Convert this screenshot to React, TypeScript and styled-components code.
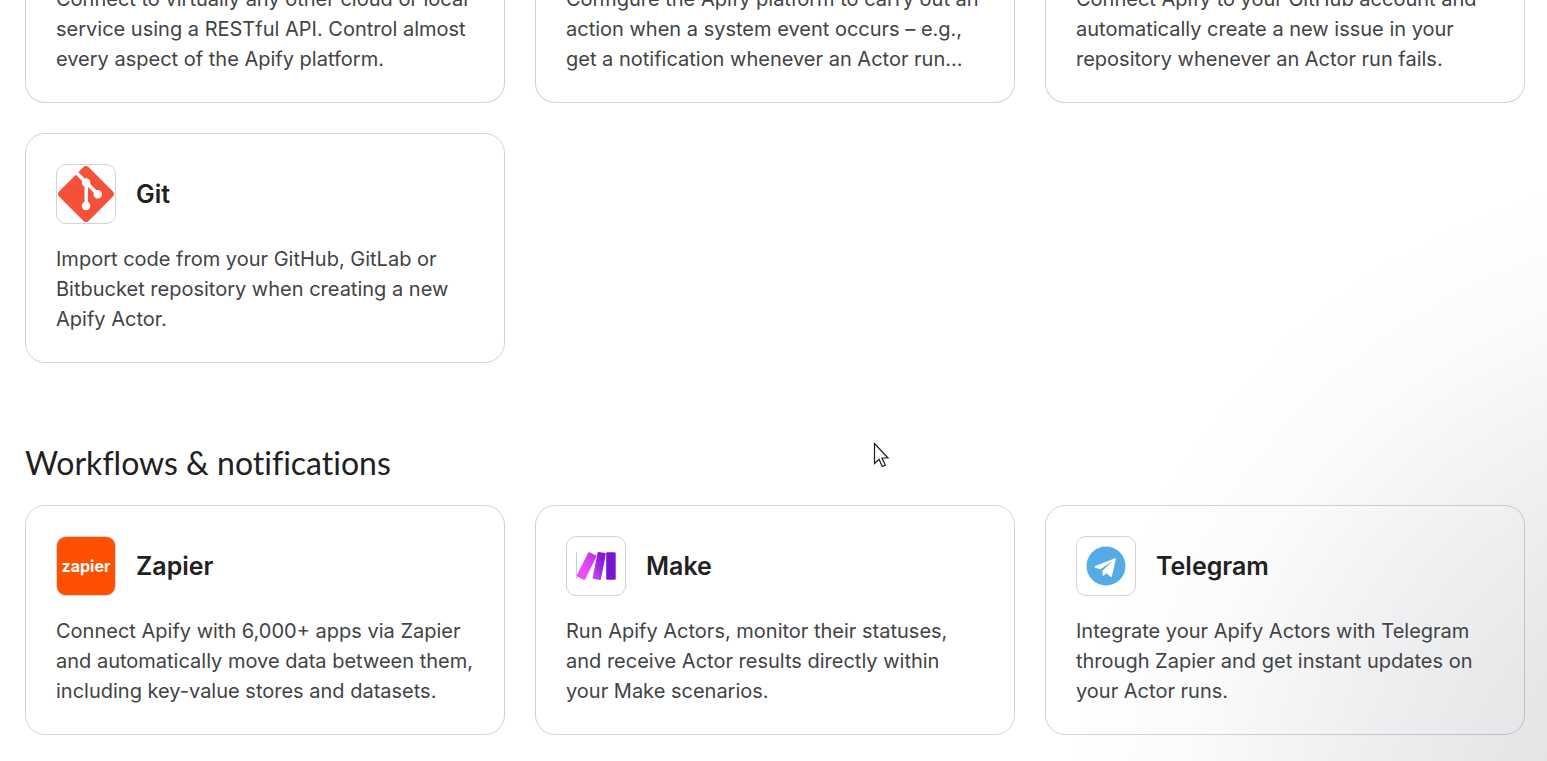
import React from "react";
import styled, { createGlobalStyle } from "styled-components";
import { SiGit } from "react-icons/si";

const GlobalStyle = createGlobalStyle`
  * { box-sizing: border-box; }
  body {
    margin: 0;
    background: #fff;
    color: #1f2123;
    font-family: Inter, "Liberation Sans", sans-serif;
  }
`;

const Page = styled.main`
  position: relative;
  min-height: 100vh;
  padding: 0 22px 26px 25px;
  overflow: hidden;
  background: radial-gradient(
    circle 680px at calc(100% + 200px) calc(100% + 80px),
    #e2e3e5 25%,
    #e5e6e8 36%,
    #edeef0 56%,
    #f4f4f5 69%,
    #fbfbfb 83%,
    #fff 100%
  );
`;

const Section = styled.section`
  & + & {
    margin-top: 80px;
  }
`;

const SectionTitle = styled.h2`
  margin: 0 0 22px;
  font-family: Lato, "Liberation Sans", sans-serif;
  font-size: 32px;
  font-weight: 400;
  font-variant-ligatures: none;
  line-height: 40px;
`;

const CardGrid = styled.div`
  display: grid;
  grid-template-columns: repeat(3, minmax(0, 1fr));
  gap: 30px;
`;

const Card = styled.article<{ $cut?: boolean }>`
  padding: ${(p) => (p.$cut ? "0 30px 28px" : "30px 30px 28px")};
  border: 1px solid rgba(20, 22, 30, 0.19);
  border-top-width: ${(p) => (p.$cut ? "0" : "1px")};
  border-radius: ${(p) => (p.$cut ? "0 0 20px 20px" : "20px")};
`;

const CardHeader = styled.header`
  display: flex;
  align-items: center;
  gap: 20px;
  margin-bottom: 20px;
`;

const LogoBox = styled.div<{ $fill?: string }>`
  display: flex;
  flex: none;
  align-items: center;
  justify-content: center;
  width: 60px;
  height: 60px;
  border: 1px solid #d2d3d6;
  border-radius: 10px;
  background: ${(p) => p.$fill ?? "#fff"};
`;

const ZapierWordmark = styled.span`
  color: #fff;
  font-size: 16px;
  font-weight: 700;
  line-height: 20px;
`;

const CardTitle = styled.h3`
  margin: 0;
  font-size: 25px;
  font-weight: 600;
  line-height: 32px;
`;

const CardText = styled.p<{ $cut?: boolean }>`
  margin: ${(p) => (p.$cut ? "-16px 0 0" : "0")};
  color: #414345;
  font-size: 20px;
  line-height: 30px;
`;

const Pointer = styled.svg`
  position: absolute;
  top: 442px;
  left: 873px;
`;

const MakeLogo = () => (
  <svg width="40" height="28" viewBox="0 0 40 28" aria-hidden="true">
    <defs>
      <linearGradient id="makeA" x1="0" y1="1" x2="1" y2="0">
        <stop offset="0.4" stopColor="#ee4bf8" />
        <stop offset="1" stopColor="#a838e0" />
      </linearGradient>
      <linearGradient id="makeB" x1="0" y1="1" x2="1" y2="0">
        <stop offset="0.1" stopColor="#c44af0" />
        <stop offset="0.7" stopColor="#8a17d8" />
      </linearGradient>
    </defs>
    <path d="M0.500 0v27" stroke="#b9d3f5" strokeWidth="1" />
    <path d="M12 1q.5-1.200 1.600-.7l6 2.900q1.200.5.700 1.600L9.300 27q-.6 1.200-1.700.7l-6-2.900q-1.200-.6-.7-1.700z" fill="url(#makeA)" />
    <path d="M21.500 1q.2-1.200 1.300-1l6 1.100q1.100.2.900 1.300L25 27q-.2 1.100-1.300.9l-6-1.200q-1.200-.3-1-1.300z" fill="url(#makeB)" />
    <rect x="30.200" y="0.200" width="9.500" height="27.600" rx="1.200" fill="#7b14cf" />
  </svg>
);

const TelegramLogo = () => (
  <svg width="40" height="40" viewBox="0 0 120 120" aria-hidden="true">
    <circle cx="60" cy="60" r="58.500" fill="#55abe6" />
    <path d="M26 62q0-1 2-2L87 37q3-1 2.500 2L78 90q-1 4-4 2L61 82l-8 7q-2 1-3-1l-1-14 31-28-37 24-15-5q-2-1-2-3z" fill="#fff" />
  </svg>
);

type Integration = {
  name: string;
  text: string;
  fill?: string;
  logo: React.ReactNode;
};

const continued = [
  "Connect to virtually any other cloud or local service using a RESTful API. Control almost every aspect of the Apify platform.",
  "Configure the Apify platform to carry out an action when a system event occurs – e.g., get a notification whenever an Actor run...",
  "Connect Apify to your GitHub account and automatically create a new issue in your repository whenever an Actor run fails.",
];

const git: Integration = {
  name: "Git",
  text: "Import code from your GitHub, GitLab or Bitbucket repository when creating a new Apify Actor.",
  logo: <SiGit size={56} color="#f4503a" />,
};

const workflows: Integration[] = [
  {
    name: "Zapier",
    text: "Connect Apify with 6,000+ apps via Zapier and automatically move data between them, including key-value stores and datasets.",
    fill: "#ff4f00",
    logo: <ZapierWordmark>zapier</ZapierWordmark>,
  },
  {
    name: "Make",
    text: "Run Apify Actors, monitor their statuses, and receive Actor results directly within your Make scenarios.",
    logo: <MakeLogo />,
  },
  {
    name: "Telegram",
    text: "Integrate your Apify Actors with Telegram through Zapier and get instant updates on your Actor runs.",
    logo: <TelegramLogo />,
  },
];

const IntegrationCard = ({ name, text, fill, logo }: Integration) => (
  <Card>
    <CardHeader>
      <LogoBox $fill={fill}>{logo}</LogoBox>
      <CardTitle>{name}</CardTitle>
    </CardHeader>
    <CardText>{text}</CardText>
  </Card>
);

export default function App() {
  return (
    <>
      <GlobalStyle />
      <Page>
        <Section>
          <CardGrid>
            {continued.map((text) => (
              <Card key={text} $cut>
                <CardText $cut>{text}</CardText>
              </Card>
            ))}
            <IntegrationCard {...git} />
          </CardGrid>
        </Section>
        <Section>
          <SectionTitle>Workflows &amp; notifications</SectionTitle>
          <CardGrid>
            {workflows.map((item) => (
              <IntegrationCard key={item.name} {...item} />
            ))}
          </CardGrid>
        </Section>
        <Pointer width="17" height="26" viewBox="0 0 17 26" aria-hidden="true">
          <path
            d="M1.500 1.500v20l4.500-4.300 3.300 7.300 3-1.400-3.300-7.100h6z"
            fill="#fff"
            stroke="#1b1b28"
            strokeWidth="1.200"
          />
        </Pointer>
      </Page>
    </>
  );
}
